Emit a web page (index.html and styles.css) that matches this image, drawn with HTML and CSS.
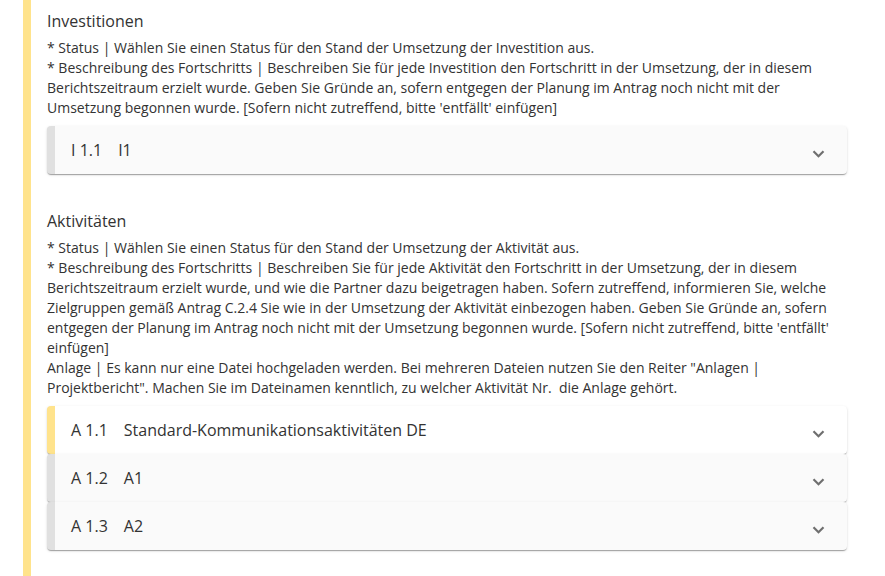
FILE: index.html
```html
<!DOCTYPE html>
<html lang="de">
<head>
<meta charset="utf-8">
<title>Bericht</title>
<link rel="stylesheet" href="styles.css">
</head>
<body>
<div class="frame">
  <section class="section">
    <h3 class="heading">Investitionen</h3>
    <p class="hint">* Status | Wählen Sie einen Status für den Stand der Umsetzung der Investition aus.<br>* Beschreibung des Fortschritts | Beschreiben Sie für jede Investition den Fortschritt in der Umsetzung, der in diesem Berichtszeitraum erzielt wurde. Geben Sie Gründe an, sofern entgegen der Planung im Antrag noch nicht mit der Umsetzung begonnen wurde. [Sofern nicht zutreffend, bitte 'entfällt' einfügen]</p>
    <div class="accordion">
      <div class="panel">
        <span class="num">I 1.1</span><span class="name">I1</span>
        <svg class="chev" width="13" height="8" viewBox="0 0 13 8"><path d="M1.5 1.2 L6.5 6.2 L11.5 1.2" fill="none" stroke="#6f6f6f" stroke-width="2.2"/></svg>
      </div>
    </div>
  </section>
  <section class="section">
    <h3 class="heading">Aktivitäten</h3>
    <p class="hint">* Status | Wählen Sie einen Status für den Stand der Umsetzung der Aktivität aus.<br>* Beschreibung des Fortschritts | Beschreiben Sie für jede Aktivität den Fortschritt in der Umsetzung, der in diesem Berichtszeitraum erzielt wurde, und wie die Partner dazu beigetragen haben. Sofern zutreffend, informieren Sie, welche Zielgruppen gemäß Antrag C.2.4 Sie wie in der Umsetzung der Aktivität einbezogen haben. Geben Sie Gründe an, sofern entgegen der Planung im Antrag noch nicht mit der Umsetzung begonnen wurde. [Sofern nicht zutreffend, bitte 'entfällt' einfügen]<br>Anlage | Es kann nur eine Datei hochgeladen werden. Bei mehreren Dateien nutzen Sie den Reiter "Anlagen | Projektbericht". Machen Sie im Dateinamen kenntlich, zu welcher Aktivität Nr.&nbsp; die Anlage gehört.</p>
    <div class="accordion">
      <div class="panel panel-active">
        <span class="num">A 1.1</span><span class="name">Standard-Kommunikationsaktivitäten DE</span>
        <svg class="chev" width="13" height="8" viewBox="0 0 13 8"><path d="M1.5 1.2 L6.5 6.2 L11.5 1.2" fill="none" stroke="#6f6f6f" stroke-width="2.2"/></svg>
      </div>
      <div class="panel">
        <span class="num">A 1.2</span><span class="name">A1</span>
        <svg class="chev" width="13" height="8" viewBox="0 0 13 8"><path d="M1.5 1.2 L6.5 6.2 L11.5 1.2" fill="none" stroke="#6f6f6f" stroke-width="2.2"/></svg>
      </div>
      <div class="panel">
        <span class="num">A 1.3</span><span class="name">A2</span>
        <svg class="chev" width="13" height="8" viewBox="0 0 13 8"><path d="M1.5 1.2 L6.5 6.2 L11.5 1.2" fill="none" stroke="#6f6f6f" stroke-width="2.2"/></svg>
      </div>
    </div>
  </section>
</div>
</body>
</html>
```

FILE: styles.css
```css
html, body {
  margin: 0;
  padding: 0;
  background: #ffffff;
}
body {
  font-family: "Open Sans", "Noto Sans", sans-serif;
  color: #333333;
  height: 576px;
  overflow: hidden;
}
.frame {
  margin-left: 23px;
  border-left: 8px solid #ffe38c;
  padding: 10px 38px 0 16px;
  min-height: 576px;
  box-sizing: border-box;
  display: flex;
  flex-direction: column;
  gap: 36px;
}
.section {
  display: flex;
  flex-direction: column;
}
.heading {
  margin: 0 0 6px 0;
  font-size: 16px;
  line-height: 22px;
  font-weight: 400;
}
.hint {
  margin: 0 0 8px 0;
  font-size: 14px;
  line-height: 20px;
}
.accordion {
  display: flex;
  flex-direction: column;
}
.panel {
  height: 48px;
  box-sizing: border-box;
  display: flex;
  align-items: center;
  background: #fafafa;
  border-left: 8px solid #e0e0e0;
  border-radius: 4px;
  padding: 0 22px 0 16px;
  font-size: 16px;
  box-shadow: 0 2px 1px -1px rgba(0,0,0,.2), 0 1px 1px 0 rgba(0,0,0,.14), 0 1px 3px 0 rgba(0,0,0,.12);
}
.panel-active {
  background: #ffffff;
  border-left-color: #ffe38c;
}
.num {
  margin-right: 16px;
}
.name {
  flex: 1;
}
.chev {
  margin-top: 7px;
}
```
